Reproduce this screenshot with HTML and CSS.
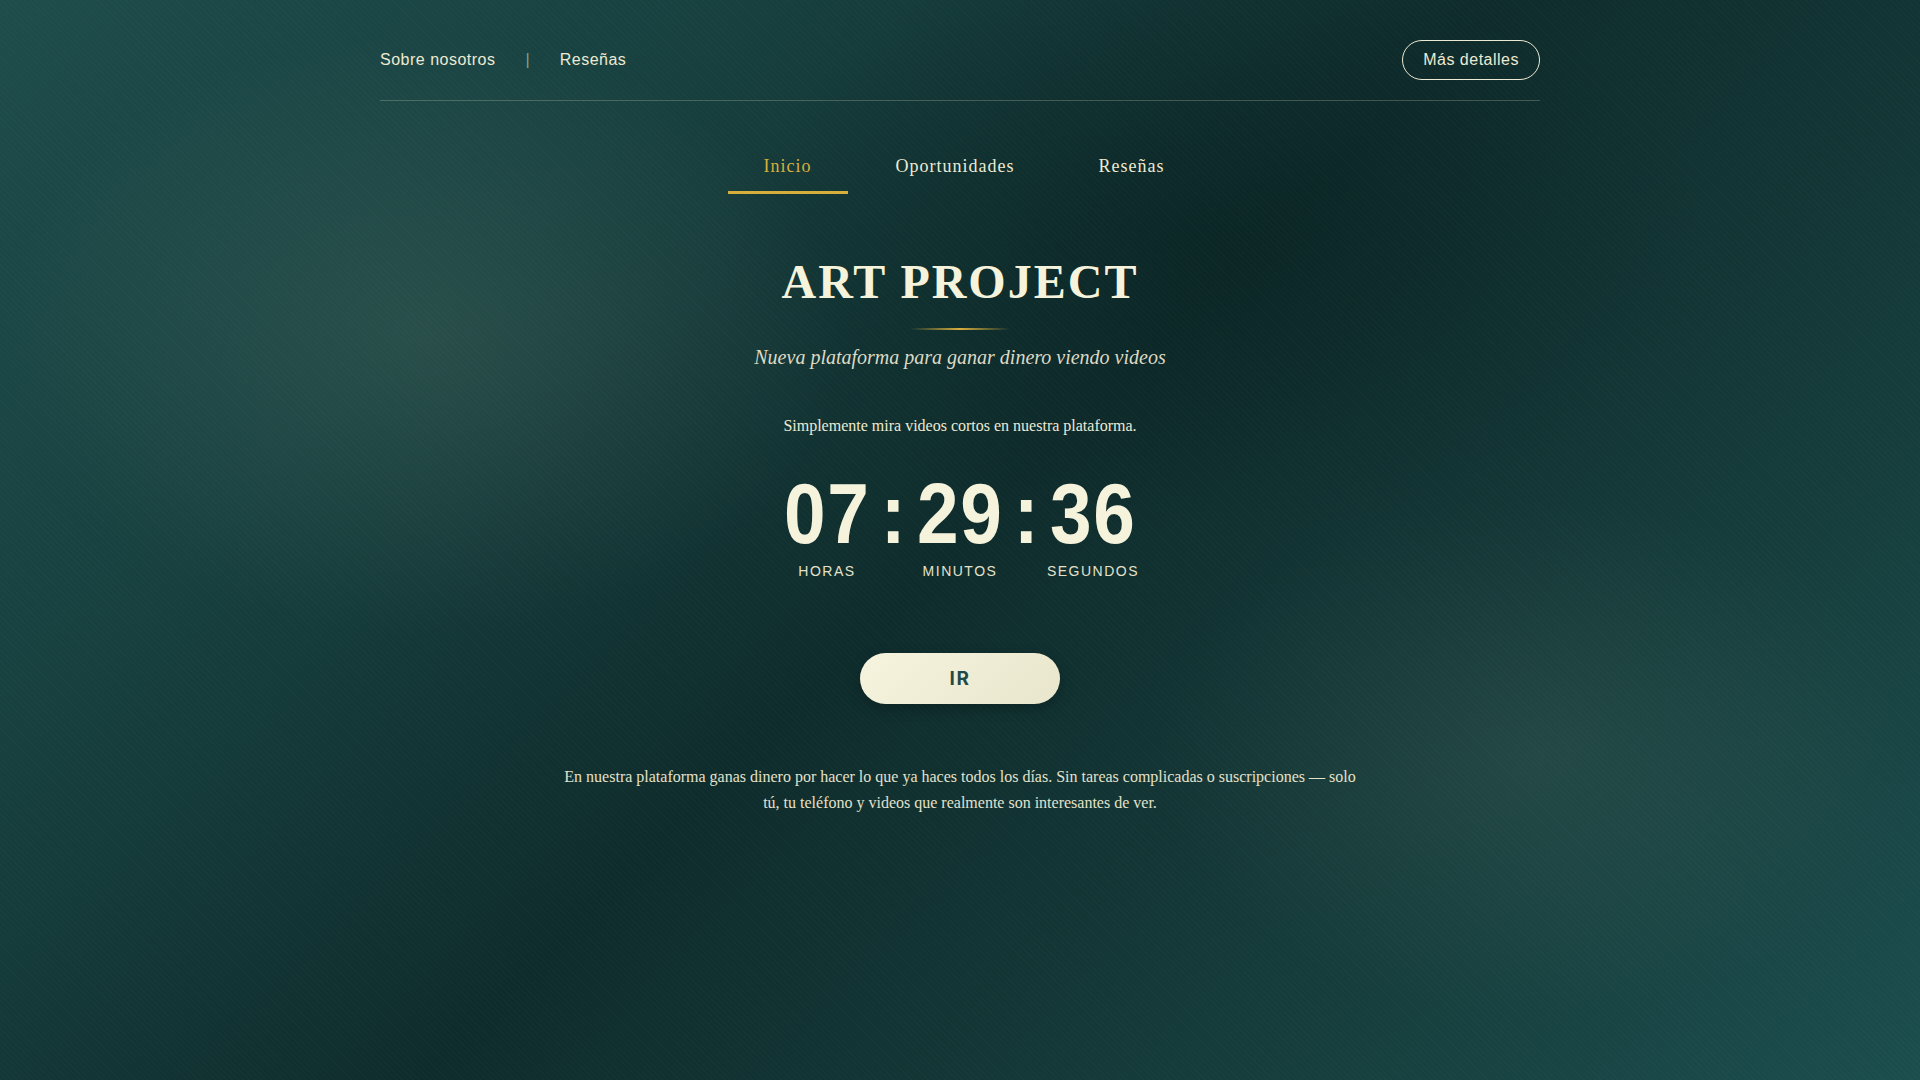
FILE: index.html
```html
<!DOCTYPE html>
<html lang="es">
<head>
<meta charset="utf-8">
<title>Art Project</title>
<link rel="stylesheet" href="styles.css">
</head>
<body>
<div class="page">
  <header class="topbar">
    <nav class="toplinks">
      <a class="toplink" href="#">Sobre nosotros</a>
      <span class="sep">|</span>
      <a class="toplink" href="#">Reseñas</a>
    </nav>
    <a class="details-btn" href="#">Más detalles</a>
  </header>

  <nav class="tabs">
    <a class="tab active" href="#">Inicio</a>
    <a class="tab" href="#">Oportunidades</a>
    <a class="tab" href="#">Reseñas</a>
  </nav>

  <main class="hero">
    <h1 class="title">ART PROJECT</h1>
    <div class="gold-line"></div>
    <p class="subtitle">Nueva plataforma para ganar dinero viendo videos</p>
    <p class="lead">Simplemente mira videos cortos en nuestra plataforma.</p>

    <div class="countdown">
      <div class="unit">
        <span class="num">07</span>
        <span class="label">HORAS</span>
      </div>
      <div class="colon"><span class="colon-glyph">:</span></div>
      <div class="unit">
        <span class="num">29</span>
        <span class="label">MINUTOS</span>
      </div>
      <div class="colon"><span class="colon-glyph">:</span></div>
      <div class="unit">
        <span class="num">36</span>
        <span class="label">SEGUNDOS</span>
      </div>
    </div>

    <a class="go-btn" href="#">IR</a>

    <p class="about">En nuestra plataforma ganas dinero por hacer lo que ya haces todos los días. Sin tareas complicadas o suscripciones — solo tú, tu teléfono y videos que realmente son interesantes de ver.</p>
  </main>
</div>
</body>
</html>
```

FILE: styles.css
```css
* {
  box-sizing: border-box;
}

html, body {
  margin: 0;
  padding: 0;
  height: 100%;
}

body {
  min-height: 100vh;
  color: #f3f1da;
  font-family: "Liberation Sans", Arial, sans-serif;
  background-color: #12312f;
  background-image:
    repeating-linear-gradient(45deg, rgba(255,255,255,0.016) 0px, rgba(255,255,255,0.016) 1px, rgba(0,0,0,0) 1px, rgba(0,0,0,0) 4px),
    radial-gradient(ellipse 420px 300px at 22% 31%, rgba(80,110,100,0.32), rgba(80,110,100,0) 100%),
    radial-gradient(ellipse 380px 260px at 80% 70%, rgba(80,110,100,0.24), rgba(80,110,100,0) 100%),
    radial-gradient(ellipse 500px 300px at 63% 22%, rgba(5,25,25,0.35), rgba(5,25,25,0) 100%),
    linear-gradient(135deg, #1e4d4c 0%, #17403f 25%, #0f2c2c 50%, #153b3a 75%, #1c4e4e 100%);
  background-attachment: fixed;
}

a {
  text-decoration: none;
  color: inherit;
}

.page {
  width: 1160px;
  margin: 0 auto;
}

/* top bar */
.topbar {
  display: flex;
  align-items: center;
  justify-content: space-between;
  padding: 40px 0 20px;
  border-bottom: 1px solid rgba(220, 220, 200, 0.25);
}

.toplinks {
  display: flex;
  align-items: center;
  gap: 30px;
  font-size: 16px;
}

.toplink {
  color: #ecead3;
  letter-spacing: 0.5px;
}

.sep {
  color: rgba(236, 234, 211, 0.55);
}

.details-btn {
  display: flex;
  align-items: center;
  height: 40px;
  padding: 0 20px;
  border: 1px solid #ecead3;
  border-radius: 20px;
  font-size: 16px;
  color: #ecead3;
  letter-spacing: 0.5px;
}

/* tabs */
.tabs {
  display: flex;
  justify-content: center;
  gap: 12px;
  margin-top: 39px;
  padding-left: 8px;
}

.tab {
  display: block;
  padding: 14px 36px 13px;
  line-height: 24px;
  font-family: "Liberation Serif", "Times New Roman", serif;
  font-size: 18px;
  letter-spacing: 1px;
  color: #ecead3;
  border-bottom: 3px solid transparent;
}

.tab.active {
  color: #d6ae3c;
  border-bottom-color: #d6ae3c;
}

/* hero */
.hero {
  display: flex;
  flex-direction: column;
  align-items: center;
  text-align: center;
}

.title {
  margin: 61px 0 0;
  font-family: "Liberation Serif", "Times New Roman", serif;
  font-weight: 700;
  font-size: 48px;
  line-height: 53px;
  letter-spacing: 2px;
  color: #f5f3dc;
}

.gold-line {
  width: 100px;
  height: 2px;
  margin-top: 20px;
  background: linear-gradient(90deg, rgba(214,174,60,0), #d6ae3c 50%, rgba(214,174,60,0));
}

.subtitle {
  margin: 14px 0 0;
  font-family: "Liberation Serif", "Times New Roman", serif;
  font-style: italic;
  font-size: 20px;
  line-height: 26px;
  color: #dcdac5;
}

.lead {
  margin: 44px 0 0;
  font-family: "Liberation Serif", "Times New Roman", serif;
  font-size: 16px;
  line-height: 24px;
  color: #ecead3;
}

/* countdown */
.countdown {
  display: flex;
  align-items: flex-start;
  margin-top: 34px;
}

.unit {
  display: flex;
  flex-direction: column;
  align-items: center;
  width: 100px;
}

.num {
  display: inline-block;
  font-family: "Liberation Sans", Arial, sans-serif;
  font-weight: 700;
  font-size: 85px;
  line-height: 84px;
  letter-spacing: 2px;
  color: #f5f3dc;
  transform: scaleX(0.88);
}

.colon {
  width: 33px;
  display: flex;
  justify-content: center;
}

.colon-glyph {
  display: inline-block;
  font-family: "Liberation Sans", Arial, sans-serif;
  font-weight: 700;
  font-size: 85px;
  line-height: 84px;
  color: #f5f3dc;
  transform: scaleX(0.88);
}

.label {
  margin-top: 6px;
  font-size: 14px;
  line-height: 18px;
  letter-spacing: 1.5px;
  color: #e3e1cb;
}

/* button */
.go-btn {
  display: flex;
  align-items: center;
  justify-content: center;
  width: 200px;
  height: 51px;
  margin-top: 73px;
  border-radius: 26px;
  background: linear-gradient(135deg, #f6f4de 0%, #e9e6cd 100%);
  box-shadow: 0 4px 14px rgba(0, 0, 0, 0.25);
  font-family: "Inter", sans-serif;
  font-weight: 700;
  font-size: 19px;
  letter-spacing: 1.5px;
  color: #1f4c4b;
}

.about {
  max-width: 800px;
  margin: 60px 0 0;
  font-family: "Liberation Serif", "Times New Roman", serif;
  font-size: 16px;
  line-height: 26px;
  color: #e3e1cb;
}
```
